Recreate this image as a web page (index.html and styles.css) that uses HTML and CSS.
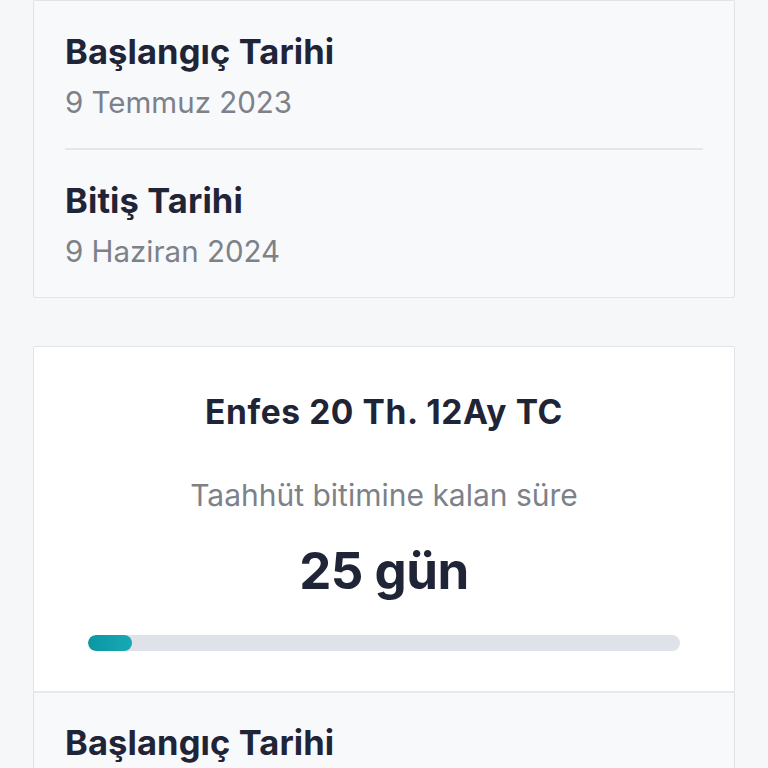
FILE: index.html
```html
<!DOCTYPE html>
<html lang="tr">
<head>
<meta charset="utf-8">
<link rel="stylesheet" href="styles.css">
</head>
<body>
<div class="page">
  <section class="card card-dates">
    <div class="item">
      <div class="label">Başlangıç Tarihi</div>
      <div class="value">9 Temmuz 2023</div>
    </div>
    <div class="item">
      <div class="label">Bitiş Tarihi</div>
      <div class="value">9 Haziran 2024</div>
    </div>
  </section>

  <section class="card card-plan">
    <div class="plan-head">
      <div class="plan-name">Enfes 20 Th. 12Ay TC</div>
      <div class="plan-sub">Taahhüt bitimine kalan süre</div>
      <div class="plan-days">25 gün</div>
      <div class="progress"><div class="progress-fill" style="width:7.4%"></div></div>
    </div>
    <div class="plan-dates">
      <div class="item">
        <div class="label">Başlangıç Tarihi</div>
        <div class="value">9 Temmuz 2023</div>
      </div>
    </div>
  </section>
</div>
</body>
</html>
```

FILE: styles.css
```css
html, body {
  margin: 0;
  padding: 0;
}
body {
  background: #f6f7f9;
  font-family: Inter, "Noto Sans", sans-serif;
  color: #1f2437;
  height: 768px;
  overflow: hidden;
}
.page {
  padding: 0 33px;
  display: flex;
  flex-direction: column;
  gap: 48px;
}
.card {
  border: 1px solid #e2e4e9;
  border-radius: 2px;
  background: #f8f9fb;
}
.card-dates {
  padding: 0 31px;
}
.item {
  padding: 31px 0 29px;
  display: flex;
  flex-direction: column;
  gap: 13px;
}
.card-dates .item + .item {
  border-top: 2px solid #e4e6ea;
}
.label {
  font-size: 34.5px;
  font-weight: 700;
  line-height: 40px;
  letter-spacing: 0.1px;
  color: #1f2437;
  white-space: nowrap;
}
.value {
  font-size: 29.5px;
  line-height: 34px;
  color: #7d818a;
  white-space: nowrap;
}
.card-plan {
  background: #ffffff;
}
.plan-head {
  display: flex;
  flex-direction: column;
  align-items: center;
  padding: 45px 54px 40px;
  border-bottom: 2px solid #e7e9ed;
}
.plan-name {
  font-size: 33.5px;
  font-weight: 700;
  line-height: 40px;
  letter-spacing: 0.6px;
  white-space: nowrap;
}
.plan-sub {
  margin-top: 46px;
  font-size: 30px;
  line-height: 34px;
  color: #7d818a;
  white-space: nowrap;
}
.plan-days {
  margin-top: 29px;
  font-size: 51px;
  font-weight: 700;
  line-height: 60px;
  letter-spacing: -0.5px;
}
.progress {
  margin-top: 34px;
  align-self: stretch;
  height: 16px;
  border-radius: 8px;
  background: #e0e2ea;
  overflow: hidden;
}
.progress-fill {
  height: 100%;
  border-radius: 8px;
  background: linear-gradient(90deg, #0b96a3, #18a9b4);
}
.plan-dates {
  background: #f8f9fb;
  padding: 0 31px;
}
.plan-dates .item {
  padding-top: 30px;
}
```
